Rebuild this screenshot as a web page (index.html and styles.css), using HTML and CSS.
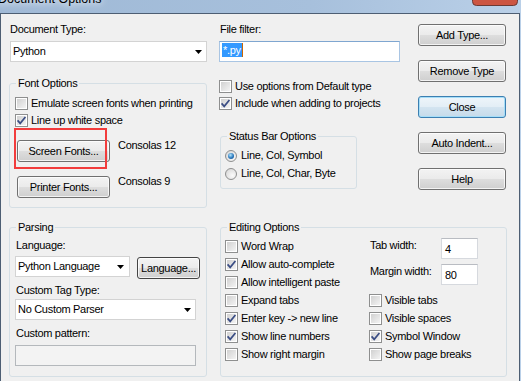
FILE: index.html
```html
<!DOCTYPE html>
<html lang="en">
<head>
  <meta charset="UTF-8">
  <title>Document Options</title>
  <link rel="stylesheet" href="styles.css">
</head>
<body>
  <div class="titlebar">
    <div class="title">Document Options</div>
    <svg class="close-btn" width="46" height="6" viewBox="0 0 46 6"><path d="M0.5 0 V1.5 Q0.5 5.5 4.5 5.5 H41.5 Q45.5 5.5 45.5 1.5 V0" fill="#cc5542" stroke="#6b3a35"/></svg>
  </div>

  <div class="dialog">
    <div class="top">
      <div class="col-left">
        <div class="lbl">Document Type:</div>
        <div class="combo doc-type">Python<svg class="arrow" width="7" height="4"><polygon points="0,0 7,0 3.5,4"/></svg></div>

        <fieldset class="group font-options">
          <legend>Font Options</legend>
          <div class="group-body">
            <div class="chk"><span class="cb"></span>Emulate screen fonts when printing</div>
            <div class="chk"><span class="cb"><svg viewBox="1 1 11 11"><path d="M2.6 6.4 5.2 9.4 10.4 3"/></svg></span>Line up white space</div>
            <div class="font-row first">
              <button class="btn font-btn">Screen Fonts...</button><span class="font-name">Consolas 12</span>
              <div class="annotation"></div>
            </div>
            <div class="font-row">
              <button class="btn font-btn">Printer Fonts...</button><span class="font-name">Consolas 9</span>
            </div>
          </div>
        </fieldset>
      </div>

      <div class="col-mid">
        <div class="lbl">File filter:</div>
        <div class="edit filter"><span class="sel">*.py</span><span class="caret"></span></div>
        <div class="chk use-default"><span class="cb"></span>Use options from Default type</div>
        <div class="chk include"><span class="cb"><svg viewBox="1 1 11 11"><path d="M2.6 6.4 5.2 9.4 10.4 3"/></svg></span>Include when adding to projects</div>

        <fieldset class="group status-bar">
          <legend>Status Bar Options</legend>
          <div class="group-body">
            <div class="chk"><span class="rb on"></span>Line, Col, Symbol</div>
            <div class="chk"><span class="rb"></span>Line, Col, Char, Byte</div>
          </div>
        </fieldset>
      </div>

      <div class="col-btns">
        <button class="btn">Add Type...</button>
        <button class="btn">Remove Type</button>
        <button class="btn default">Close</button>
        <button class="btn">Auto Indent...</button>
        <button class="btn">Help</button>
      </div>
    </div>

    <div class="bottom">
      <fieldset class="group parsing">
        <legend>Parsing</legend>
        <div class="group-body">
          <div class="lbl">Language:</div>
          <div class="lang-row">
            <div class="combo lang">Python Language<svg class="arrow" width="7" height="4"><polygon points="0,0 7,0 3.5,4"/></svg></div>
            <button class="btn lang-btn">Language...</button>
          </div>
          <div class="lbl tag-lbl">Custom Tag Type:</div>
          <div class="combo tag">No Custom Parser<svg class="arrow" width="7" height="4"><polygon points="0,0 7,0 3.5,4"/></svg></div>
          <div class="lbl pattern-lbl">Custom pattern:</div>
          <div class="edit pattern"></div>
        </div>
      </fieldset>

      <fieldset class="group editing">
        <legend>Editing Options</legend>
        <div class="group-body edit-cols">
          <div class="edit-left">
            <div class="chk"><span class="cb"></span>Word Wrap</div>
            <div class="chk"><span class="cb"><svg viewBox="1 1 11 11"><path d="M2.6 6.4 5.2 9.4 10.4 3"/></svg></span>Allow auto-complete</div>
            <div class="chk"><span class="cb"></span>Allow intelligent paste</div>
            <div class="chk"><span class="cb"></span>Expand tabs</div>
            <div class="chk"><span class="cb"><svg viewBox="1 1 11 11"><path d="M2.6 6.4 5.2 9.4 10.4 3"/></svg></span>Enter key -&gt; new line</div>
            <div class="chk"><span class="cb"><svg viewBox="1 1 11 11"><path d="M2.6 6.4 5.2 9.4 10.4 3"/></svg></span>Show line numbers</div>
            <div class="chk"><span class="cb"></span>Show right margin</div>
          </div>
          <div class="edit-right">
            <div class="num-row"><span class="num-lbl">Tab width:</span><div class="edit num">4</div></div>
            <div class="num-row second"><span class="num-lbl">Margin width:</span><div class="edit num">80</div></div>
            <div class="chk first-vis"><span class="cb"></span>Visible tabs</div>
            <div class="chk"><span class="cb"></span>Visible spaces</div>
            <div class="chk"><span class="cb"><svg viewBox="1 1 11 11"><path d="M2.6 6.4 5.2 9.4 10.4 3"/></svg></span>Symbol Window</div>
            <div class="chk"><span class="cb"></span>Show page breaks</div>
          </div>
        </div>
      </fieldset>
    </div>
  </div>
</body>
</html>
```

FILE: styles.css
```css
* {
  box-sizing: border-box;
}

body {
  margin: 0;
  width: 521px;
  height: 381px;
  overflow: hidden;
  background: linear-gradient(to right, #9fb9d6, #a7c0dc 60%, #bad0e8);
  font-family: 'Liberation Sans', Arial, sans-serif;
  font-size: 11px;
  line-height: 13px;
  letter-spacing: -0.3px;
  color: #000;
}

/* window frame */

.titlebar {
  height: 13px;
  display: flex;
  align-items: flex-start;
  justify-content: space-between;
  overflow: hidden;
}

.title {
  font-size: 12.5px;
  line-height: 15px;
  letter-spacing: 0;
  margin: -8px 0 0 -2px;
  text-shadow: 0 0 6px #fff, 0 0 12px rgba(255, 255, 255, 0.8);
}

.close-btn {
  flex: none;
  margin-right: 3px;
}

.dialog {
  width: 520px;
  height: 368px;
  background: #f0f0f0;
  border: 1px solid #4d5e73;
  border-bottom: none;
  padding: 9px 0 0 8px;
}

/* common controls */

.lbl {
  padding-left: 1px;
}

.combo {
  display: flex;
  align-items: center;
  justify-content: space-between;
  height: 21px;
  background: #fff;
  border: 1px solid #d3d3d3;
  padding: 0 4px 0 2px;
}

.arrow {
  flex: none;
}

.edit {
  height: 21px;
  background: #fff;
  border: 1px solid #d6d9de;
  border-top-color: #b9bcc2;
}

.btn {
  font: inherit;
  letter-spacing: inherit;
  color: #000;
  height: 22px;
  padding: 0;
  border: 1px solid #707070;
  border-radius: 3px;
  background: linear-gradient(#f3f3f3, #ebebeb 48%, #dddddd 52%, #cfcfcf);
  box-shadow: inset 0 0 0 1px rgba(255, 255, 255, 0.75);
}

.btn.default {
  border-color: #3c7fb1;
  background: linear-gradient(#eef5fa, #e3eef6 48%, #d3e4f0 52%, #c6dbea);
  box-shadow: inset 0 0 0 1px #a6def8;
}

.chk {
  display: flex;
  align-items: center;
  gap: 3px;
  height: 13px;
}

.cb {
  flex: none;
  display: flex;
  width: 13px;
  height: 13px;
  border: 1px solid #8e8f8f;
  background: linear-gradient(135deg, #cdcdcd, #f7f7f7);
  box-shadow: inset 0 0 0 1px #fff;
}

.cb svg {
  width: 11px;
  height: 11px;
  fill: none;
  stroke: #3a4d84;
  stroke-width: 1.7;
}

.rb {
  flex: none;
  display: flex;
  align-items: center;
  justify-content: center;
  width: 12px;
  height: 12px;
  margin-right: 1px;
  border: 1px solid #8e8f8f;
  border-radius: 50%;
  background: radial-gradient(circle at 65% 65%, #fbfbfb, #d2d2d2);
}

.rb.on::after {
  content: '';
  width: 6px;
  height: 6px;
  border-radius: 50%;
  background: radial-gradient(circle at 40% 35%, #b6e6fd, #2a78bd 55%, #0d4680);
}

.group {
  margin: 0;
  padding: 0;
  min-width: 0;
  border: 1px solid #d5dfe5;
  border-radius: 3px;
}

.group legend {
  margin-left: 6px;
  padding: 0 2px;
  line-height: 13px;
}

/* top area */

.top {
  display: flex;
}

.col-left {
  width: 198px;
}

.doc-type {
  margin: 5px 0 0 1px;
  width: 197px;
}

.font-options {
  margin-top: 15px;
  height: 131px;
}

.font-options .group-body {
  padding: 7px 0 0 5px;
}

.font-options .chk + .chk {
  margin-top: 4px;
}

.font-row {
  display: flex;
  align-items: flex-start;
  margin-top: 14px;
}

.font-row.first {
  position: relative;
  margin-top: 13px;
}

.font-btn {
  width: 93px;
  margin-left: 2px;
}

.font-name {
  margin: -1px 0 0 8px;
}

.annotation {
  position: absolute;
  left: -1px;
  top: -12px;
  width: 93px;
  height: 41px;
  border: 2px solid #f23c3c;
}

.col-mid {
  width: 181px;
  margin-left: 12px;
}

.filter {
  display: flex;
  align-items: flex-start;
  margin-top: 5px;
  padding: 1px 0 0 2px;
  border-color: #a9c5e3;
  border-top-color: #7fa6d0;
}

.sel {
  background: #3399ff;
  color: #fff;
  line-height: 14px;
  padding: 0 1px;
}

.caret {
  width: 1px;
  height: 14px;
  background: #cc6600;
}

.use-default {
  margin-top: 18px;
}

.include {
  margin-top: 4px;
}

.status-bar {
  margin: 20px 0 0 1px;
  width: 137px;
  height: 59px;
}

.status-bar .group-body {
  padding: 6px 0 0 4px;
}

.status-bar .chk + .chk {
  margin-top: 5px;
}

.col-btns {
  width: 88px;
  margin-left: 18px;
  padding-top: 1px;
  display: flex;
  flex-direction: column;
  gap: 14px;
}

/* bottom area */

.bottom {
  display: flex;
  margin-top: 13px;
}

.parsing {
  width: 198px;
  height: 156px;
}

.parsing .group-body {
  padding: 5px 0 0 5px;
}

.lang-row {
  display: flex;
  align-items: flex-start;
  margin-top: 4px;
  height: 23px;
}

.lang {
  width: 115px;
  padding-right: 5px;
}

.lang-btn {
  width: 63px;
  margin: 1px 0 0 7px;
  border-color: #444;
}

.tag-lbl {
  margin-top: 5px;
}

.tag {
  width: 181px;
  margin-top: 2px;
}

.pattern-lbl {
  margin-top: 7px;
}

.pattern {
  width: 181px;
  margin-top: 5px;
  background: #f3f3f3;
  border-color: #b4b8bc;
}

.editing {
  width: 287px;
  height: 156px;
  margin-left: 13px;
}

.edit-cols {
  display: flex;
  padding: 6px 0 0 4px;
}

.edit-left {
  width: 144px;
}

.edit-cols .chk + .chk {
  margin-top: 5px;
}

.num-row {
  display: flex;
  align-items: flex-start;
  margin-top: -2px;
}

.num-row.second {
  margin-top: 5px;
}

.num-lbl {
  width: 72px;
  padding-left: 1px;
  margin-top: 1px;
}

.num {
  width: 37px;
  padding: 4px 0 0 3px;
}

.edit-right .first-vis {
  margin-top: 9px;
}
```
